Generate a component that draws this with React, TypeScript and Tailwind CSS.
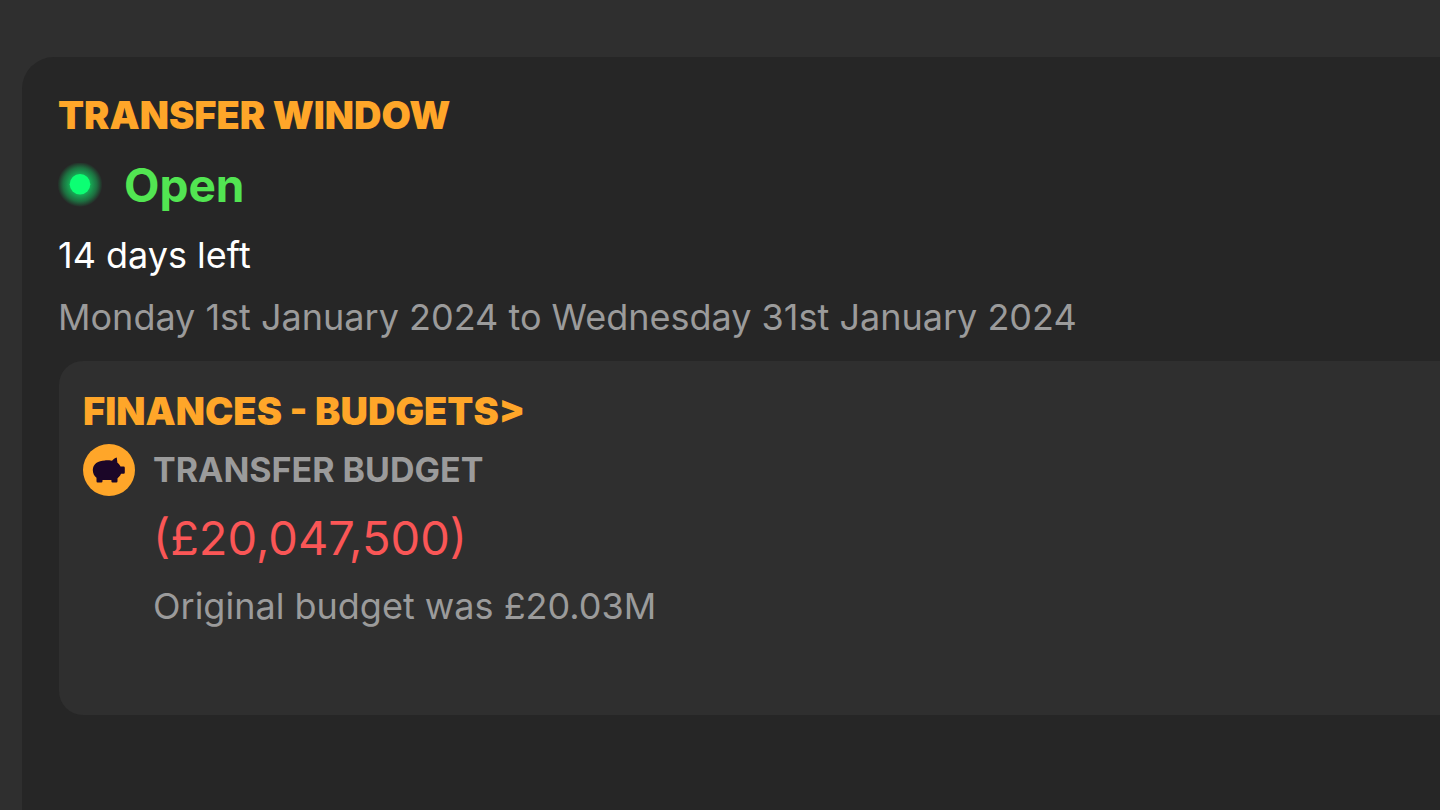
const WINDOW = {
    status: 'Open',
    remaining: '14 days left',
    dates: 'Monday 1st January 2024 to Wednesday 31st January 2024',
};

const BUDGET = {
    label: 'TRANSFER BUDGET',
    amount: '(£20,047,500)',
    original: 'Original budget was £20.03M',
};

const StatusLight = () => (
    <svg className="size-11 shrink-0" viewBox="0 0 44 44" aria-hidden="true">
        <defs>
            <radialGradient id="glow">
                <stop offset="0.4" stopColor="#0cff73" stopOpacity="0.66" />
                <stop offset="0.75" stopColor="#0cff73" stopOpacity="0.34" />
                <stop offset="1" stopColor="#0cff73" stopOpacity="0" />
            </radialGradient>
        </defs>
        <circle cx="22" cy="21.5" r="22.5" fill="url(#glow)" />
        <circle cx="22" cy="21.3" r="10.3" fill="#0cff73" />
    </svg>
);

const PiggyBank = () => (
    <svg className="size-13 shrink-0" viewBox="0 0 52 52" aria-hidden="true">
        <circle cx="26" cy="26" r="26" fill="#ffa629" />
        <path
            fill="#1b0628"
            d="M9.8 26C9.8 19.8 15 16.6 22 16.4C24.5 16.3 27 16.5 29 16.8C30.3 15.4 31.8 14.3 33.8 13.6L34.4 18.8C35.8 19.8 36.9 21.2 37.5 22.6H40.6Q41.8 22.6 41.8 23.8V28.6Q41.8 29.8 40.6 29.8H38C37.2 31.8 36 33.3 34.5 34.2V37.3Q34.5 38.5 33.3 38.5H29.6Q28.4 38.5 28.4 37.3V36H19.5V37.3Q19.5 38.5 18.3 38.5H14.6Q13.5 38.5 13.5 37.3V33.8C11.2 32 9.8 29.2 9.8 26Z"
        />
    </svg>
);

const App = () => {
    return (
        <main className="flex min-h-screen bg-[#2f2f2f] pt-[57px] pl-[22px] font-['Inter',sans-serif] text-[36px] leading-12 text-[#9b9b9b]">
            <section className="flex-1 rounded-tl-[32px] bg-[#262626] pt-[38px] pb-6 pl-9">
                <h1 className="text-[38px] leading-10 font-black text-[#ffa629]">
                    TRANSFER WINDOW
                </h1>

                <div className="mt-[22px] flex items-center gap-[22px]">
                    <StatusLight />
                    <p className="text-[46px] leading-14 font-bold text-[#52e552]">
                        {WINDOW.status}
                    </p>
                </div>

                <p className="mt-[18px] text-white">{WINDOW.remaining}</p>
                <p className="mt-[14px]">{WINDOW.dates}</p>

                <section className="ml-px mt-5 rounded-l-3xl bg-[#2f2f2f] pt-[30px] pb-[85px] pl-6">
                    <h2 className="text-[38px] leading-10 font-black">
                        <a href="#budgets" className="text-[#ffa629]">
                            FINANCES - BUDGETS&gt;
                        </a>
                    </h2>

                    <div className="mt-[13px] flex items-start gap-[18px]">
                        <PiggyBank />
                        <div>
                            <h3 className="text-[34px] leading-13 font-bold">{BUDGET.label}</h3>
                            <p className="mt-[14px] text-[47px] leading-14 text-[#fa5656]">
                                {BUDGET.amount}
                            </p>
                            <p className="mt-4">{BUDGET.original}</p>
                        </div>
                    </div>
                </section>
            </section>
        </main>
    );
};

export default App;
